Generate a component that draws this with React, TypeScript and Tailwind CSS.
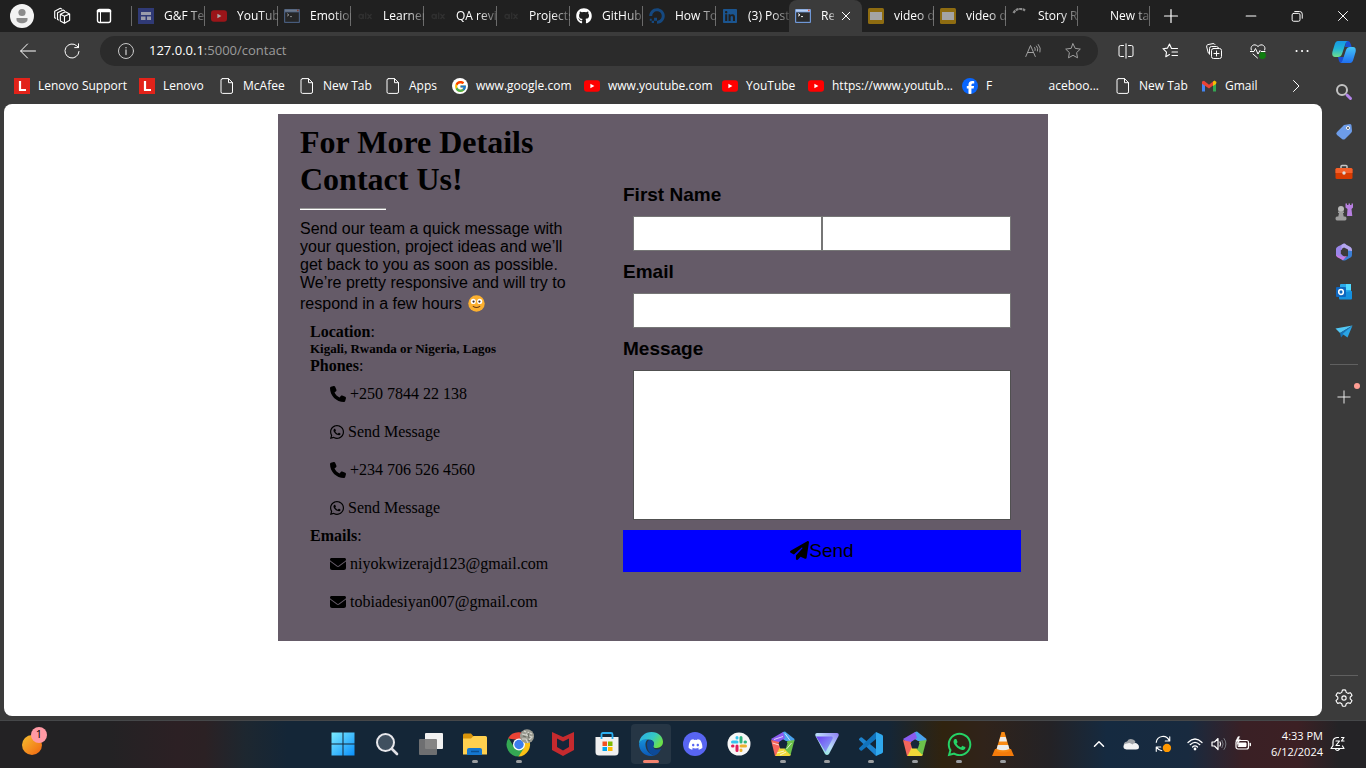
import type { ReactNode } from "react";
import {
  FaDigitalOcean,
  FaDiscord,
  FaEnvelope,
  FaFacebookF,
  FaGithub,
  FaLinkedin,
  FaPaperPlane,
  FaPhone,
  FaWhatsapp,
} from "react-icons/fa6";
import { FcGoogle } from "react-icons/fc";

/* ---------- small shared drawings ---------- */

function Line({ children, size = 16, className = "" }: { children: ReactNode; size?: number; className?: string }) {
  return (
    <svg width={size} height={size} viewBox="0 0 16 16" fill="none" stroke="currentColor" strokeWidth="1" strokeLinecap="round" strokeLinejoin="round" className={"shrink-0 " + className}>
      {children}
    </svg>
  );
}

function YouTubeIcon({ dim = false }: { dim?: boolean }) {
  return (
    <svg width="16" height="16" viewBox="0 0 16 16" className="shrink-0">
      <rect x="0" y="2.2" width="16" height="11.6" rx="3" fill={dim ? "#9b1519" : "#ff0000"} />
      <path d="M6.4 5.7v4.6L10.4 8z" fill={dim ? "#aaa" : "#fff"} />
    </svg>
  );
}

function ConsoleIcon({ dim = false }: { dim?: boolean }) {
  return (
    <svg width="16" height="16" viewBox="0 0 16 16" className="shrink-0" opacity={dim ? 0.5 : 1}>
      <rect x="0" y="1" width="16" height="14" rx="1" fill="#6f97d6" />
      <rect x="1" y="1.6" width="14" height="2" fill="#b9d0f2" />
      <rect x="13" y="1.6" width="1.6" height="1.6" fill="#e2573c" />
      <rect x="1.2" y="4.4" width="13.6" height="9.4" fill="#2c2c2c" />
      <path d="M3 5.6l2 1.3-2 1.3M6 8.6h2" stroke="#fff" fill="none" strokeWidth=".9" />
    </svg>
  );
}

function PageIcon() {
  return (
    <Line>
      <path d="M3.5.6h6l4 4v9.3a1.5 1.5 0 0 1-1.5 1.5H3.5A1.5 1.5 0 0 1 2 13.9V2.1A1.5 1.5 0 0 1 3.5.6M9.5.8v3.9h3.9" />
    </Line>
  );
}

function LenovoIcon() {
  return (
    <svg width="16" height="16" viewBox="0 0 16 16" className="shrink-0">
      <rect width="16" height="16" fill="#e2231a" />
      <path d="M6 3v9.5M5 12h7" stroke="#fff" strokeWidth="2.2" />
    </svg>
  );
}

function SlidesIcon() {
  return (
    <svg width="16" height="16" viewBox="0 0 16 16" className="shrink-0">
      <rect width="16" height="16" rx="1.5" fill="#8e6c11" />
      <rect x="2" y="4" width="12" height="8" fill="#a4a4a4" />
    </svg>
  );
}

function FormIcon() {
  return (
    <svg width="16" height="16" viewBox="0 0 16 16" className="shrink-0">
      <rect width="16" height="16" fill="#303a76" />
      <path d="M3 4h10v3H3zM3 8.500h4.500V12H3zM9 8.500h4V12H9z" fill="#9a9cab" />
    </svg>
  );
}

function AlxIcon() {
  return (
    <svg width="16" height="16" viewBox="0 0 16 16" fill="none" stroke="#303030" strokeWidth="1.3" className="shrink-0">
      <circle cx="4" cy="8.5" r="2" />
      <path d="M6.3 6v5M8.7 4.500V11M10.5 6l4 5M14.5 6l-4 5" />
    </svg>
  );
}

function SpinnerIcon() {
  return (
    <svg width="16" height="16" viewBox="0 0 16 16" fill="none" stroke="#8b8b8b" strokeWidth="2.2" strokeDasharray="3 .6" className="shrink-0">
      <path d="M1.5 5A7.500 7.500 0 0 1 13 2.600" />
    </svg>
  );
}

function GmailIcon() {
  return (
    <svg width="16" height="16" viewBox="0 0 16 16" className="shrink-0">
      <path d="M1 4v9.500h3V7z" fill="#4285f4" />
      <path d="M15 4v9.500h-3V7z" fill="#34a853" />
      <path d="M12 3.600L13.500 2.500 15.500 4 15 6l-3 2z" fill="#fbbc04" />
      <path d="M1 3.500L3 2.700 8 6.700l4-3.100v4L8 10.600 1 5.700z" fill="#ea4335" />
    </svg>
  );
}

/* ---------- title bar ---------- */

type Tab = { title: string; icon: ReactNode; active?: boolean };

const tabs: Tab[] = [
  { title: "G&F Tech", icon: <FormIcon /> },
  { title: "YouTube", icon: <YouTubeIcon dim /> },
  { title: "Emotion", icon: <ConsoleIcon dim /> },
  { title: "Learners", icon: <AlxIcon /> },
  { title: "QA review", icon: <AlxIcon /> },
  { title: "Projects", icon: <AlxIcon /> },
  { title: "GitHub", icon: <FaGithub size={16} className="shrink-0 text-white" /> },
  { title: "How To", icon: <FaDigitalOcean size={16} className="shrink-0 text-[#15487f]" /> },
  { title: "(3) Post", icon: <FaLinkedin size={16} className="shrink-0 text-[#1b5590]" /> },
  { title: "Re", icon: <ConsoleIcon />, active: true },
  { title: "video d", icon: <SlidesIcon /> },
  { title: "video d", icon: <SlidesIcon /> },
  { title: "Story R", icon: <SpinnerIcon /> },
  { title: "New tab", icon: <span className="w-4 shrink-0" /> },
];

function TitleBar() {
  return (
    <header className="flex h-8 shrink-0 items-center bg-[#202020]">
      <div className="flex w-[131px] shrink-0 items-center gap-4 pl-[10px]">
        <button aria-label="Profile">
          <svg width="24" height="24" viewBox="0 0 24 24">
            <circle cx="12" cy="12" r="12" fill="#f3f3f3" />
            <circle cx="12" cy="8.5" r="3.6" fill="#8b8b8b" />
            <path d="M6.5 14h11v1.500c0 5-11 5-11 0z" fill="#8b8b8b" />
          </svg>
        </button>
        <button aria-label="Workspaces" className="flex w-6 justify-center">
          <Line size={18}>
            <path d="M6.5 6.500l4.500-2.300 3.800 2v5.600L10.200 14.500l-3.700-2zM4 11V5.200L9 2.700l1.200.6M1.500 9.500V3.700L6.500 1.200l1.200.6M6.500 6.500l3.700 1.800 4.600-2.100M10.200 8.300v6.200M4 11l.8.500M1.500 9.500l.8.500" />
          </Line>
        </button>
        <button aria-label="Vertical tabs" className="flex w-7 justify-center">
          <Line>
            <rect x="1.5" y="1.5" width="13" height="13" rx="2" strokeWidth="1.4" />
            <path d="M2 3h12" strokeWidth="2.6" />
            <path d="M4.5 3v11.500" />
          </Line>
        </button>
      </div>
      <span className="h-5 w-px shrink-0 bg-[#6b6b6b]" />
      <nav aria-label="Tabs" className="flex h-8 w-[1018px] min-w-0 shrink">
        {tabs.map((tab, i) =>
          tab.active ? (
            <div key={i} className="flex w-[73px] min-w-0 shrink items-center gap-[10px] rounded-t-lg bg-[#3b3b3b] pl-[6px]">
              {tab.icon}
              <div className="flex items-center gap-[7px]">
                <a href="#tab" className="w-[13px] overflow-hidden whitespace-nowrap [mask-image:linear-gradient(to_right,#000_55%,#0006)]">{tab.title}</a>
                <button aria-label="Close tab">
                  <Line size={10}>
                    <path d="M2 2l12 12M14 2L2 14" strokeWidth="1.6" />
                  </Line>
                </button>
              </div>
            </div>
          ) : (
            <a
              key={i}
              href="#tab"
              className={
                i < 8
                  ? "flex w-[73px] min-w-0 shrink items-center gap-[10px] bg-[linear-gradient(#6b6b6b,#6b6b6b)] bg-[length:1px_20px] bg-[position:right_center] bg-no-repeat pl-[6px]"
                  : i === 8
                    ? "flex w-[73px] min-w-0 shrink items-center gap-[10px] pl-[6px]"
                    : "flex w-[72px] min-w-0 shrink items-center gap-[10px] bg-[linear-gradient(#6b6b6b,#6b6b6b)] bg-[length:1px_20px] bg-[position:right_center] bg-no-repeat pl-[6px]"
              }
            >
              {tab.icon}
              <span className="min-w-0 flex-1 overflow-hidden whitespace-nowrap [mask-image:linear-gradient(to_right,#000_55%,#0003)]">{tab.title}</span>
            </a>
          ),
        )}
      </nav>
      <button aria-label="New tab" className="flex w-[42px] shrink-0 justify-center">
        <Line>
          <path d="M8 1.500v13M1.500 8h13" strokeWidth="1.2" />
        </Line>
      </button>
      <div className="ml-auto flex shrink-0">
        <button aria-label="Minimize" className="flex w-[46px] justify-center">
          <Line size={12}><path d="M1.500 8h13" strokeWidth="1.4" /></Line>
        </button>
        <button aria-label="Restore" className="flex w-[46px] justify-center">
          <Line size={12}><path d="M3.500 4.500H10a2 2 0 0 1 2 2V13a2 2 0 0 1-2 2H3.500a2 2 0 0 1-2-2V6.500a2 2 0 0 1 2-2M5 2h6.500A3.500 3.500 0 0 1 15 5.500V11" strokeWidth="1.3" /></Line>
        </button>
        <button aria-label="Close" className="flex w-[46px] justify-center">
          <Line size={12}><path d="M2 2l12 12M14 2L2 14" strokeWidth="1.3" /></Line>
        </button>
      </div>
    </header>
  );
}

/* ---------- toolbar and bookmarks ---------- */

function Toolbar() {
  return (
    <div className="flex h-[38px] shrink-0 items-center">
      <button aria-label="Back" className="flex w-11 shrink-0 justify-center pl-3">
        <Line><path d="M15.500 8H.800M7.500 1L.600 8l6.900 7" /></Line>
      </button>
      <button aria-label="Refresh" className="flex w-11 shrink-0 justify-center pl-3">
        <Line><path d="M15 8.500a7 7 0 1 1-2.200-5.600L14.500 4.500M14.500.800v3.800h-3.800" /></Line>
      </button>
      <div className="ml-3 flex h-[30px] min-w-0 flex-1 items-center rounded-full bg-[#2b2b2b] pr-[17px] pl-[18px]">
        <Line className="text-[#c8c8c8]">
          <circle cx="8" cy="8" r="7.5" />
          <path d="M8 7v4.500" strokeWidth="1.3" />
          <path d="M8 4.700v.1" strokeWidth="1.5" />
        </Line>
        <a href="#contact" className="ml-[15px] flex-1 text-[13px] text-[#9b9b9b]">
          <span className="text-white">127.0.0.1</span>:5000/contact
        </a>
        <button aria-label="Read aloud" className="text-[#a0a0a0]">
          <Line><path d="M.800 13.500L5.500 2.500l4.800 11M2.500 9.500h6M9.700 4.500q1 1.500.400 3M11.500 3q2 2.300 1 5M13.300 1.500q3 3.500 1.700 7.500" /></Line>
        </button>
        <button aria-label="Favourite" className="ml-6 text-[#a0a0a0]">
          <Line><path d="M8 .800l2.200 4.600 5.100.700-3.700 3.500.9 5.200L8 12.300l-4.500 2.500.9-5.200L.700 6.100l5.100-.700z" /></Line>
        </button>
      </div>
      <div className="flex shrink-0 items-center gap-7 pr-3 pl-5">
        <button aria-label="Split screen">
          <Line><path d="M5.500 2.500H2.500A1.500 1.500 0 0 0 1 4v8a1.500 1.500 0 0 0 1.500 1.500h3M10.500 2.500h3A1.500 1.500 0 0 1 15 4v8a1.500 1.500 0 0 1-1.500 1.500h-3M8 .800v14.400" /></Line>
        </button>
        <button aria-label="Favourites">
          <Line><path d="M7.500 11.500l-3.700 2.200.7-4.500L1 5.700l4.500-.6L7.500 1l2 4.500h6M10 9h5.500M10 12.500h5.500" strokeWidth="1.1" /></Line>
        </button>
        <button aria-label="Collections">
          <Line><rect x="5.5" y="5.5" width="10" height="10" rx="2" /><path d="M10.500 8v5M8 10.500h5M3.500 11L2.300 10 .700 4a2 2 0 0 1 1.200-2.400L7 .600a2 2 0 0 1 2 .900M3.500 11V5.500q0-2 2-2h5q1.500 0 2 1.500" /></Line>
        </button>
        <button aria-label="Browser essentials">
          <Line>
            <path d="M1.300 7C-.300 3.500 4-.500 8 3.500 12-.500 16.300 3.500 14.700 7M0 8.500h4l1.500-3 2.500 5.500L10 7.500l1 1h4M3 11l4.500 4" />
            <circle cx="12.5" cy="12.5" r="3.4" fill="#107c10" stroke="none" />
          </Line>
        </button>
        <button aria-label="More">
          <Line><path d="M2.500 8h.1M8 8h.1M13.500 8h.1" strokeWidth="2" /></Line>
        </button>
      </div>
    </div>
  );
}

const bookmarks: { label: string; icon: ReactNode; width: string }[] = [
  { label: "Lenovo Support", icon: <LenovoIcon />, width: "w-[125px]" },
  { label: "Lenovo", icon: <LenovoIcon />, width: "w-20" },
  { label: "McAfee", icon: <PageIcon />, width: "w-20" },
  { label: "New Tab", icon: <PageIcon />, width: "w-[86px]" },
  { label: "Apps", icon: <PageIcon />, width: "w-[67px]" },
  {
    label: "www.google.com",
    icon: <span className="flex size-4 shrink-0 items-center justify-center rounded-full bg-white"><FcGoogle size={13} /></span>,
    width: "w-[132px]",
  },
  { label: "www.youtube.com", icon: <YouTubeIcon />, width: "w-[138px]" },
  { label: "YouTube", icon: <YouTubeIcon />, width: "w-[86px]" },
  { label: "https://www.youtub...", icon: <YouTubeIcon />, width: "w-[154px]" },
];

function Bookmark({ label, icon, width }: { label: string; icon: ReactNode; width: string }) {
  return (
    <a href="#bookmark" className={"flex shrink-0 items-center gap-2 whitespace-nowrap " + width}>
      {icon}
      {label}
    </a>
  );
}

function Bookmarks() {
  return (
    <nav aria-label="Bookmarks" className="flex h-[34px] shrink-0 items-center overflow-hidden pb-0.5 pl-[14px]">
      {bookmarks.map((b, i) => (
        <Bookmark key={i} {...b} />
      ))}
      <a href="#bookmark" className="flex w-[153px] shrink-0 items-center gap-2 pr-4">
        <span className="flex size-4 shrink-0 items-end justify-center overflow-hidden rounded-full bg-[#0866ff]">
          <FaFacebookF size={13} className="text-white" />
        </span>
        F
        <span className="ml-auto">aceboo...</span>
      </a>
      <Bookmark label="New Tab" icon={<PageIcon />} width="w-[86px]" />
      <Bookmark label="Gmail" icon={<GmailIcon />} width="w-[87px]" />
      <button aria-label="More bookmarks" className="shrink-0">
        <Line><path d="M5.500 2.500L11 8l-5.500 5.500" /></Line>
      </button>
    </nav>
  );
}

/* ---------- page content ---------- */

function HappyFace() {
  return (
    <svg viewBox="0 0 18 18" role="img" aria-label="smiling face" className="mx-0.5 mt-[3px] inline-block size-[17px] align-[-3px]">
      <circle cx="9" cy="9" r="8.7" fill="#fcb02f" />
      <circle cx="5.6" cy="6.8" r="2.7" fill="#fff" />
      <circle cx="12.4" cy="6.8" r="2.7" fill="#fff" />
      <circle cx="5.9" cy="6.9" r="1.2" fill="#40302a" />
      <circle cx="12.1" cy="6.9" r="1.2" fill="#40302a" />
      <path d="M5.500 12q3.500 2.600 7 0" stroke="#6b3a13" strokeWidth="1.1" fill="none" strokeLinecap="round" />
    </svg>
  );
}

function ContactLink({ icon, children }: { icon: ReactNode; children: ReactNode }) {
  return (
    <li className="px-5 py-[10px]">
      <a href="#reach" className="flex h-[18px] items-center gap-1">
        {icon}
        {children}
      </a>
    </li>
  );
}

function ContactDetails() {
  return (
    <section className="w-[300px] shrink-0 pt-[10px] pb-5 pl-[22px] font-['Liberation_Serif',serif] text-base leading-[18px]">
      <h1 className="text-[32px] leading-[37px] font-bold">For More Details Contact Us!</h1>
      <hr className="mt-[10px] h-0.5 w-[86px] border-t border-b border-t-[#9a9a9a] border-b-white" />
      <p className="mt-[10px] font-['Liberation_Sans',sans-serif]">
        Send our team a quick message with your question, project ideas and we’ll get back to you as soon as possible. We’re pretty responsive and will try to respond in a few hours <HappyFace />
      </p>
      <div className="pt-[10px] pl-[10px]">
        <p><b>Location</b>:</p>
        <h5 className="text-[13px] leading-4 font-bold">Kigali, Rwanda or Nigeria, Lagos</h5>
        <p><b>Phones</b>:</p>
        <ul>
          <ContactLink icon={<FaPhone size={16} />}>+250 7844 22 138</ContactLink>
          <ContactLink icon={<FaWhatsapp size={16} className="w-[14px]" />}>Send Message</ContactLink>
          <ContactLink icon={<FaPhone size={16} />}>+234 706 526 4560</ContactLink>
          <ContactLink icon={<FaWhatsapp size={16} className="w-[14px]" />}>Send Message</ContactLink>
        </ul>
        <p><b>Emails</b>:</p>
        <ul>
          <ContactLink icon={<FaEnvelope size={16} />}>niyokwizerajd123@gmail.com</ContactLink>
          <ContactLink icon={<FaEnvelope size={16} />}>tobiadesiyan007@gmail.com</ContactLink>
        </ul>
      </div>
    </section>
  );
}

function ContactForm() {
  return (
    <form className="mr-[27px] ml-[45px] flex min-w-0 flex-1 flex-col self-center font-['Liberation_Sans',sans-serif] text-[19px] leading-[22px]">
      <label htmlFor="first-name" className="font-bold">First Name</label>
      <div className="m-[10px] flex">
        <input id="first-name" className="h-[35px] min-w-0 flex-1 border border-[#767676] bg-white px-2" />
        <input aria-label="Last Name" className="h-[35px] min-w-0 flex-1 border border-[#767676] bg-white px-2" />
      </div>
      <label htmlFor="email" className="font-bold">Email</label>
      <input id="email" type="email" className="m-[10px] h-[35px] border border-[#767676] bg-white px-2" />
      <label htmlFor="message" className="font-bold">Message</label>
      <textarea id="message" className="m-[10px] h-[150px] resize-none border border-[#505050] bg-white px-2" />
      <button type="button" className="flex h-[42px] items-center justify-center bg-[#0000ff]">
        <FaPaperPlane size={19} />
        Send
      </button>
    </form>
  );
}

/* ---------- side bar ---------- */

function SideItem({ label, children }: { label: string; children: ReactNode }) {
  return (
    <button aria-label={label} className="flex h-10 shrink-0 items-center justify-center">
      {children}
    </button>
  );
}

function SideBar() {
  return (
    <aside className="flex w-11 shrink-0 flex-col">
      <SideItem label="Copilot">
        <svg width="24" height="22" viewBox="0 0 24 22">
          <defs>
            <linearGradient id="cpA" x1="0" y1="0" x2="0" y2="1"><stop stopColor="#1598e6" /><stop offset=".5" stopColor="#22b5d6" /><stop offset="1" stopColor="#6fe08c" /></linearGradient>
            <linearGradient id="cpB" x1="0" y1="0" x2="0" y2="1"><stop stopColor="#45c6f7" /><stop offset="1" stopColor="#1f6ff0" /></linearGradient>
          </defs>
          <path d="M14 0h2q2 0 2.700 3l1 3H13zM6 16h6l-1 4q-.5 2 2 2H9.500q-2 0-2.500-2z" fill="#1a4fd4" />
          <path d="M6 0h10q-2 0-3 4l-3 9q-1 3-4 3H3Q-.500 16 .400 11L2.500 4Q3.500 0 6 0z" fill="url(#cpA)" />
          <path d="M18 6h3q3.500 0 2.600 5l-2.100 7q-1 4-3.500 4H8q2 0 3-4l3-9q1-3 4-3z" fill="url(#cpB)" />
        </svg>
      </SideItem>
      <SideItem label="Search">
        <svg width="18" height="18" viewBox="0 0 18 18" fill="none">
          <circle cx="7" cy="7" r="5" stroke="#c2c2c2" strokeWidth="2" />
          <path d="M12 12l3.500 3.500" stroke="#b284e8" strokeWidth="3" strokeLinecap="round" />
        </svg>
      </SideItem>
      <SideItem label="Shopping">
        <svg width="18" height="18" viewBox="0 0 18 18">
          <path d="M9 2l6-1q1.500 0 1.500 1.500L17 8q0 1-1 2l-6 6q-1.500 1-3 0L2 12q-1.500-1.500 0-3z" fill="#6d9ce8" />
          <circle cx="13" cy="5" r="1.5" fill="#3b3b3b" stroke="#fff" />
        </svg>
      </SideItem>
      <SideItem label="Tools">
        <svg width="18" height="16" viewBox="0 0 18 16">
          <path d="M6 4V2.500Q6 1.500 7 1.500h4q1 0 1 1V4" stroke="#c5c5c5" strokeWidth="1.5" fill="none" />
          <rect x=".5" y="4" width="17" height="11" rx="1.5" fill="#d83b01" />
          <path d="M.500 5.500Q.500 4 2 4h14q1.500 0 1.500 1.500V9H.500z" fill="#f4602a" />
          <circle cx="9" cy="9" r="1.7" fill="#ddd" />
        </svg>
      </SideItem>
      <SideItem label="Games">
        <svg width="18" height="18" viewBox="0 0 18 18">
          <path d="M10.500.500H12V2h1.500V.500H15V2h1.500V.500H18v4L16.500 6l.8 7H12l.5-7-2-1.500z" fill="#b77fe0" />
          <circle cx="6" cy="6" r="3" fill="#b9b9b9" />
          <path d="M3 8.500h6V10H8l.8 4H3.200L4 10H3zM2 13.500h8q1.500 0 1.500 2t-1.500 2H2q-1.500 0-1.500-2t1.500-2z" fill="#9d9d9d" />
        </svg>
      </SideItem>
      <SideItem label="Microsoft 365">
        <svg width="18" height="18" viewBox="0 0 18 18">
          <path d="M5 2.500L9 .500q1.500 0 2 1L7 5v7l3 2-2 3L2 13.500Q1 13 1 12V6q0-2 4-3.500z" fill="#9a86ea" />
          <path d="M9 .500L15.500 4Q17 5 17 7v4l-4-2V6.500L9 4.500 6.500 6V2q1-1 2.500-1.500z" fill="#b3a6ee" />
          <path d="M17 8v4q0 1.500-1.500 2.500L11 17q-2 1-4 0l6-4V7.500z" fill="#3a7fd6" />
          <path d="M1 11.500l5 2.500 6-1-4 4.200L2 14z" fill="#c67be2" />
          <path d="M9 5.500l3.200 1.800v3.700L9 12.800l-3.200-1.800V7.300z" fill="#3b3b3b" />
        </svg>
      </SideItem>
      <SideItem label="Outlook">
        <svg width="18" height="18" viewBox="0 0 18 18">
          <rect x="5" y="1" width="11" height="13" rx="1" fill="#28a8ea" />
          <path d="M11 1h5v6h-5z" fill="#50d9ff" />
          <path d="M4 10l13-2v7.500q0 1-1 1H5q-1 0-1-1z" fill="#1490df" />
          <rect x="1" y="4" width="10" height="10" rx="1" fill="#0f67bf" />
          <ellipse cx="6" cy="9" rx="2.3" ry="2.5" fill="none" stroke="#fff" strokeWidth="1.5" />
        </svg>
      </SideItem>
      <SideItem label="Drop">
        <svg width="18" height="16" viewBox="0 0 18 16">
          <path d="M17.500 1.500L.500 4.500 5 9z" fill="#52c8f5" />
          <path d="M17.500 1.500L5 9l1 4.500 2.500-3z" fill="#1672b8" />
          <path d="M17.500 1.500L7.500 10l5 3.500z" fill="#2aa5e5" />
        </svg>
      </SideItem>
      <hr className="mx-2 mt-3 border-[#606060]" />
      <button aria-label="Customize" className="relative mt-3 flex h-10 items-center justify-center">
        <Line size={14}><path d="M8 1v14M1 8h14" /></Line>
        <span className="absolute top-[6px] right-[6px] size-[6px] rounded-full bg-[#ff9e94]" />
      </button>
      <hr className="mx-2 mt-auto border-[#606060]" />
      <button aria-label="Settings" className="flex h-11 items-center justify-center">
        <Line size={18}>
          <path d="M6.600 1Q8 .500 9.400 1l.6 2 1.500.9 2.100-.6q1.100 1.100 1.500 2.500L13.500 7.300v1.500l1.600 1.500q-.4 1.400-1.500 2.500l-2.100-.6-1.500.9-.6 2Q8 15.600 6.600 15.100L6 13.100l-1.500-.9-2.100.6Q1.300 11.700.9 10.300l1.600-1.500V7.300L.9 5.800Q1.300 4.400 2.400 3.300l2.100.6L6 3z" />
          <circle cx="8" cy="8" r="1.9" />
        </Line>
      </button>
    </aside>
  );
}

/* ---------- task bar ---------- */

function Knot({ lines = false }: { lines?: boolean }) {
  return (
    <svg width="26" height="26" viewBox="0 0 26 26">
      <path d="M13 1l2-.500L24.500 8 24 11l-8-1-5-3z" fill="#4aa3ee" />
      <path d="M13 1l2 6-6 4-4 1-4-4z" fill="#8a5cf0" />
      <path d="M1 9l8 2 2 6-4 8H5z" fill="#f4665c" />
      <path d="M5.500 25l4-8h8l3.500 7-1.500 1z" fill="#f2d838" />
      <path d="M24.500 9L20.500 24l-6-6 3-8z" fill="#6cc24a" />
      <path d="M13 9l4.500 3.300-1.700 5.200h-5.600l-1.700-5.200z" fill="#14263a" />
      {lines && <path d="M4 8.500l9-3M2.500 12l6.500 2M15 2.500l5 7M21.500 12l-5 6M7 22l7-2M10 24l6-3" stroke="#fff" strokeWidth=".9" opacity=".8" />}
    </svg>
  );
}

const apps: { name: string; icon: ReactNode; running?: boolean; active?: boolean }[] = [
  {
    name: "Start",
    icon: (
      <svg width="24" height="24" viewBox="0 0 24 24">
        <defs><linearGradient id="win" x1="0" y1="0" x2="1" y2="1"><stop stopColor="#7cecff" /><stop offset="1" stopColor="#0a8ffb" /></linearGradient></defs>
        <path d="M.500.500h11v11H.500zM12.500.500h11v11h-11zM.500 12.500h11v11H.500zM12.500 12.500h11v11h-11z" fill="url(#win)" />
      </svg>
    ),
  },
  {
    name: "Search",
    icon: (
      <svg width="24" height="24" viewBox="0 0 24 24">
        <circle cx="10.5" cy="10.5" r="8.5" fill="#40505f" stroke="#e8e8ec" strokeWidth="2" />
        <path d="M17 17l5 5" stroke="#e0e0e6" strokeWidth="2.6" strokeLinecap="round" />
      </svg>
    ),
  },
  {
    name: "Task view",
    icon: (
      <svg width="24" height="24" viewBox="0 0 24 24">
        <rect x="6" y="1" width="18" height="16" rx="1" fill="#f1f1f1" />
        <rect x="0" y="7" width="18" height="16" rx="1" fill="#787878" opacity=".9" />
      </svg>
    ),
  },
  {
    name: "File Explorer",
    running: true,
    icon: (
      <svg width="24" height="24" viewBox="0 0 24 24">
        <path d="M0 3q0-1.500 1.500-1.500H8L11 5v5H0z" fill="#d9940a" />
        <path d="M0 6.500h8L10.500 4H22.500Q24 4 24 5.500v17H0z" fill="#ffd04f" />
        <path d="M4 23v-5q0-2 2-2h11q2 0 2 2v5z" fill="#1577cf" />
        <path d="M8 19.500h8" stroke="#0b4f91" strokeWidth="1.5" />
      </svg>
    ),
  },
  {
    name: "Chrome",
    running: true,
    icon: (
      <svg width="30" height="30" viewBox="0 0 30 30">
        <path d="M4 9.500A12 12 0 0 1 25.500 10.500L15 11z" fill="#ea4335" />
        <path d="M4.500 9A12 12 0 0 0 15 27.500L21 19 10 18z" fill="#34a853" />
        <path d="M25 10.500A12 12 0 0 1 14.500 27.500L20 19 18 10.500z" fill="#fbc116" />
        <circle cx="15" cy="15.5" r="6" fill="#fff" />
        <circle cx="15" cy="15.5" r="4.7" fill="#3b7ded" />
        <circle cx="23" cy="7.2" r="7" fill="#9a9b91" />
        <path d="M18 5l4 1 3-3M18 10l4 0 2 4M22 6l6 2-3 3M20 2l2 1M26 4l2 1" stroke="#d5d6ce" strokeWidth="1.200" fill="none" />
        <path d="M19 7l3 1M24 4l1 5M24 11l2 1" stroke="#6c6f66" strokeWidth="1.200" fill="none" />
      </svg>
    ),
  },
  {
    name: "McAfee",
    icon: (
      <svg width="22" height="24" viewBox="0 0 22 24">
        <path d="M0 0l11 5L22 0v18l-11 6L0 18z" fill="#c52a2e" />
        <path d="M5 6.500l6 3 6-3V15l-6 3.500L5 15z" fill="#14263a" />
      </svg>
    ),
  },
  {
    name: "Microsoft Store",
    icon: (
      <svg width="24" height="24" viewBox="0 0 24 24">
        <path d="M.500 5h23v15q0 3.500-3.500 3.500H4Q.500 23.500.500 20z" fill="#f0f0f0" />
        <path d="M6.500 7V2.500Q6.500 1 8 1h8q1.500 0 1.500 1.500V7" fill="none" stroke="#2aaef0" strokeWidth="1.8" />
        <path d="M7.500 9.500H12V14H7.500z" fill="#f25022" /><path d="M13 9.500h4.500V14H13z" fill="#7fba00" />
        <path d="M7.500 15H12v4H7.500z" fill="#00a4ef" /><path d="M13 15h4.500v4H13z" fill="#ffb900" />
      </svg>
    ),
  },
  {
    name: "Edge",
    active: true,
    icon: (
      <svg width="24" height="24" viewBox="0 0 24 24">
        <defs>
          <linearGradient id="edA" x1="0" y1="0" x2="1" y2=".5"><stop stopColor="#2aa9e8" /><stop offset=".6" stopColor="#35c9c4" /><stop offset="1" stopColor="#6be04a" /></linearGradient>
          <linearGradient id="edB" x1="0" y1="0" x2="0" y2="1"><stop stopColor="#1690d8" /><stop offset="1" stopColor="#0c59b8" /></linearGradient>
        </defs>
        <path d="M0 11.500C.500 4.500 6 0 12.500 0 19.500 0 24 5 24 9.800c0 4-3 6.200-6.200 6.200-3 0-4.300-1.200-3.300-2.600C16 11 14 7.500 9.500 7.500 5 7.500 1.500 9 0 11.500z" fill="url(#edA)" />
        <path d="M0 12C1 8 5 6.500 8.500 7.500 4 11 7 23 16 23.300 7.500 26 0 20 0 12z" fill="url(#edB)" />
        <path d="M8 12c0-2 1-4 3-4.300 3 .300 5 3.300 3.500 5.700-1 4.600 4.500 5 8 2.900C20 21 18 23 15.500 23.400 10 22.500 8 17 8 12z" fill="#0d4a98" />
      </svg>
    ),
  },
  {
    name: "Discord",
    icon: <span className="flex size-6 items-center justify-center rounded-full bg-[#5865f2] text-white"><FaDiscord size={15} /></span>,
  },
  {
    name: "Slack",
    icon: (
      <svg width="24" height="24" viewBox="0 0 24 24" strokeWidth="3" strokeLinecap="round">
        <circle cx="12" cy="12" r="11.5" fill="#f7f7f7" />
        <path d="M10 5.500V6M5.500 10H10" stroke="#36c5f0" /><path d="M14 5.500V10M18.500 10H18" stroke="#2eb67d" />
        <path d="M14 14h4.500M14 18.500V18" stroke="#ecb22e" /><path d="M10 14v4.500M5.500 14H6" stroke="#e01e5a" />
      </svg>
    ),
  },
  { name: "Team tool", running: true, icon: <Knot lines /> },
  {
    name: "Proton VPN",
    running: true,
    icon: (
      <svg width="24" height="24" viewBox="0 0 24 24">
        <defs>
          <linearGradient id="pvA" x1="0" y1="0" x2="1" y2="1"><stop stopColor="#6a3df2" /><stop offset="1" stopColor="#8fb4f7" /></linearGradient>
          <linearGradient id="pvB" x1="1" y1="0" x2="0" y2="1"><stop stopColor="#8d7cf4" /><stop offset=".5" stopColor="#b9dcf8" /><stop offset="1" stopColor="#7ff0cf" /></linearGradient>
        </defs>
        <path d="M2 1h20q2.500.500 1.500 3L14 22q-2 2-4 0L.500 4Q-.500 1.500 2 1z" fill="url(#pvB)" />
        <path d="M1 4.500h15.500q2 .500 1 2.500L10.500 20z" fill="url(#pvA)" />
      </svg>
    ),
  },
  {
    name: "Visual Studio Code",
    running: true,
    icon: (
      <svg width="24" height="24" viewBox="0 0 24 24">
        <path d="M17 24v-7L3 5.500q-.8-.5-1.500 0L.200 6.700q-.5.7 0 1.400z" fill="#1d83cf" />
        <path d="M17 0v7L3 18.500q-.8.5-1.500 0L.200 17.300q-.5-.7 0-1.400z" fill="#1173bd" />
        <path d="M17 0l6 2.700q1 .6 1 1.600v15.400q0 1-1 1.600L17 24z" fill="#2fa8ee" />
      </svg>
    ),
  },
  { name: "Team tool preview", running: true, icon: <Knot /> },
  { name: "WhatsApp", running: true, icon: <FaWhatsapp size={27} className="text-[#25d366]" /> },
  {
    name: "VLC",
    running: true,
    icon: (
      <svg width="22" height="24" viewBox="0 0 22 24">
        <path d="M3 17h16l3 7H0z" fill="#f47b0b" />
        <path d="M9.500 0h3L18 19q-7 3-14 0z" fill="#f98a14" />
        <path d="M8.300 5h5.400l1.300 4.500H7zM5.800 13h10.400l1.200 4q-6.400 2.500-12.800 0z" fill="#ececec" />
      </svg>
    ),
  },
];

function TaskBar() {
  return (
    <footer className="flex h-12 shrink-0 items-center border-t border-[#454749] bg-[linear-gradient(to_right,#232224_0%,#232224_8%,#2c2024_13%,#2b2124_15%,#1d2730_18%,#142637_21%,#142637_65%,#30230f_69%,#30231a_72%,#232226_77%,#152a40_81%,#182a3f_87%,#3a2025_91%,#3c2024_95%,#242326_98%)]">
      <div className="w-[321px] shrink-0 pl-[22px]">
        <button aria-label="Widgets" className="relative flex size-6 items-end">
          <span className="mb-0.5 size-5 rounded-full bg-linear-to-br from-[#f3bf2f] to-[#ef6010]" />
          <span className="absolute -top-[6px] left-[9px] flex size-4 items-center justify-center rounded-full bg-[#ff99a4] text-[11px] text-black">1</span>
        </button>
      </div>
      <nav aria-label="Apps" className="flex shrink-0">
        {apps.map((app) => (
          <div key={app.name} className="flex w-11 justify-center pb-px">
            <button
              aria-label={app.name}
              className={
                app.active
                  ? "relative flex h-10 w-10 items-center justify-center rounded bg-[#263645]"
                  : "relative flex h-10 w-10 items-center justify-center"
              }
            >
              {app.icon}
              {app.active && <span className="absolute bottom-px h-[3px] w-4 rounded-full bg-[#f2836f]" />}
              {app.running && <span className="absolute bottom-px h-[3px] w-[6px] rounded-full bg-[#9a9da0]" />}
            </button>
          </div>
        ))}
      </nav>
      <div className="ml-auto flex shrink-0 items-center pr-5 pb-px">
        <button aria-label="Hidden icons" className="flex w-8 justify-center"><Line size={12}><path d="M2 11l6-6 6 6" strokeWidth="2" /></Line></button>
        <button aria-label="OneDrive" className="flex w-8 justify-center">
          <svg width="16" height="12" viewBox="0 0 16 12">
            <path d="M1 8Q0 4 4 3.500 6 0 10 1.500 12 2 12.500 4L8 9z" fill="#a2a5a9" />
            <path d="M3.500 11.500Q0 11 .500 8 1 5.500 4 5.500 7 4 9.500 6.500 12 4 14.500 6 16 7 16 9q0 2.500-3 2.500z" fill="#f3f3f3" />
          </svg>
        </button>
        <button aria-label="Updates" className="flex w-8 justify-center">
          <Line size={18}>
            <path d="M2 6.500A6 6 0 0 1 13.500 5M14 1.500V5.300h-4M2 14.500V10.700h4M2.300 11Q4 13.500 7 14" />
            <circle cx="11.5" cy="11.5" r="3.7" fill="#ff9800" stroke="none" />
          </Line>
        </button>
        <button aria-label="Network, sound and battery" className="flex w-20 items-center gap-2 pl-2">
          <Line>
            <path d="M1 6.500Q8-.500 15 6.500M3.200 8.700Q8 4 12.800 8.700M5.500 11Q8 8.700 10.500 11" strokeWidth="1.2" />
            <circle cx="8" cy="13" r="1.4" fill="currentColor" stroke="none" />
          </Line>
          <Line>
            <path d="M1 6v4h2.500L7 13.500v-11L3.500 6zM9 6q1.200 2 0 4" strokeWidth="1.2" />
            <path d="M11 4.300q2.500 3.700 0 7.400M13 2.500q4 5.500 0 11" stroke="#777b82" />
          </Line>
          <Line>
            <rect x="1" y="4.5" width="12.5" height="8.5" rx="2" strokeWidth="1.2" />
            <path d="M3.500 7h7.500v3.500H3.500z" fill="currentColor" />
            <path d="M15.300 7.500v2" strokeWidth="1.4" />
            <path d="M3 .8L.8 5h2L2 8.500 5.300 3.700h-2L4.500.8z" fill="currentColor" strokeWidth=".5" />
          </Line>
        </button>
        <button className="w-16 text-right text-[11px] leading-4 whitespace-nowrap">
          4:33 PM<br />6/12/2024
        </button>
        <button aria-label="Notifications" className="ml-[7px]">
          <Line>
            <path d="M8.500 1.500H7A4.500 4.500 0 0 0 3 6v3.500L1 12.500h13L12.500 10M5.500 13q1.500 3 4 0M6 5h3.500L6 9.500h3.500M11.500 1.500H14L11.500 5H14" strokeWidth="1.2" />
          </Line>
        </button>
      </div>
    </footer>
  );
}

export default function App() {
  return (
    <div className="flex h-screen flex-col overflow-hidden bg-[#3b3b3b] font-['Open_Sans','Noto_Sans',sans-serif] text-xs text-white">
      <TitleBar />
      <div className="flex min-h-0 flex-1">
        <div className="flex min-w-0 flex-1 flex-col">
          <Toolbar />
          <Bookmarks />
          <main className="mb-1 ml-1 min-h-0 flex-1 overflow-hidden rounded-lg bg-white pt-[10px] text-black">
            <div className="mx-auto flex max-w-[770px] bg-[#655b68]">
              <ContactDetails />
              <ContactForm />
            </div>
          </main>
        </div>
        <SideBar />
      </div>
      <TaskBar />
    </div>
  );
}
